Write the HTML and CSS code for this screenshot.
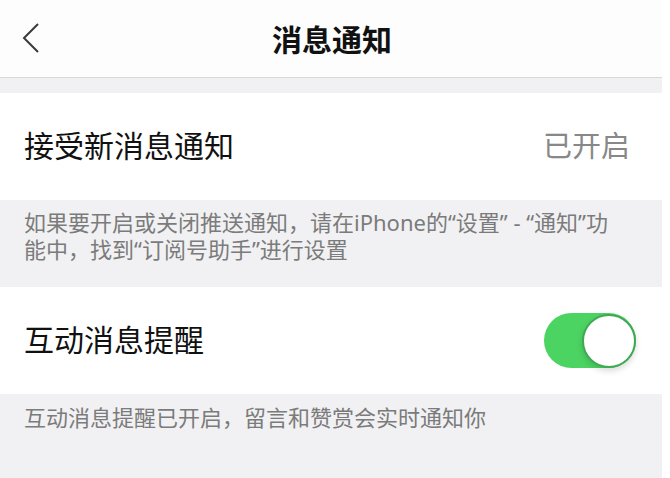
FILE: index.html
```html
<!DOCTYPE html>
<html lang="zh-CN">
<head>
  <meta charset="UTF-8" />
  <meta name="viewport" content="width=device-width, initial-scale=1.0" />
  <title>消息通知</title>
  <link rel="stylesheet" href="styles.css">
</head>
<body>
  <div class="screen">
    <div class="navbar">
      <svg class="back" width="18" height="30" viewBox="0 0 18 30">
        <polyline points="16,1 2,15 16,29" fill="none" stroke="#3a3a3a" stroke-width="2" />
      </svg>
      <div class="title">消息通知</div>
    </div>
    <div class="gap"></div>

    <div class="row">
      <div class="label">接受新消息通知</div>
      <div class="value">已开启</div>
    </div>
    <div class="tip tip-first">如果要开启或关闭推送通知，请在iPhone的“设置” - “通知”功能中，找到“订阅号助手”进行设置</div>

    <div class="row">
      <div class="label">互动消息提醒</div>
      <div class="switch on"><div class="knob"></div></div>
    </div>
    <div class="tip tip-last">互动消息提醒已开启，留言和赞赏会实时通知你</div>
  </div>
</body>
</html>
```

FILE: styles.css
```css
body {
  margin: 0;
  background: #fff;
  font-family: "Noto Sans", "Noto Sans CJK SC", sans-serif;
}

.screen {
  width: 662px;
  height: 478px;
  background: #f1f1f3;
  overflow: hidden;
}

.navbar {
  height: 77px;
  background: #fdfdfd;
  border-bottom: 1px solid #d8d8d8;
  display: flex;
  align-items: center;
  justify-content: center;
  position: relative;
}

.back {
  position: absolute;
  left: 22px;
  top: 23px;
}

.title {
  font-size: 30px;
  font-weight: bold;
  color: #111;
  margin-left: 2px;
  margin-top: -2px;
}

.gap {
  height: 15px;
}

.row {
  height: 107px;
  background: #fff;
  display: flex;
  align-items: center;
  justify-content: space-between;
  padding: 0 26px 0 24px;
}

.label {
  font-size: 30px;
  color: #111;
  margin-top: -5px;
}

.value {
  font-size: 29px;
  color: #888;
  margin-right: 6px;
  margin-top: -5px;
}

.tip {
  font-size: 22px;
  line-height: 27px;
  color: #7b7b7b;
  padding: 9px 36px 0 24px;
}

.tip-first {
  height: 78px;
}

.tip-last {
  padding-top: 10px;
}

.switch {
  width: 92px;
  height: 55px;
  border-radius: 28px;
  background: #4cd463;
  position: relative;
}

.knob {
  position: absolute;
  right: 0;
  top: 1px;
  width: 50px;
  height: 50px;
  border-radius: 50%;
  background: #fff;
  border: 2px solid #3fa952;
  box-shadow: 0 3px 6px rgba(0, 0, 0, 0.15);
}
```
